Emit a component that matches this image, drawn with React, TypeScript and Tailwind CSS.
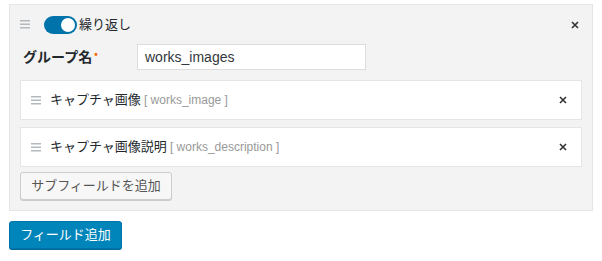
import React from 'react';

const font = "font-['Helvetica_Neue','Liberation_Sans','Noto_Sans_CJK_JP',sans-serif]";

const Handle: React.FC = () => (
  <svg width="10" height="9" viewBox="0 0 10 9" className="shrink-0">
    <rect x="0" y="0" width="10" height="1.5" fill="#b4b9be" />
    <rect x="0" y="3.5" width="10" height="1.5" fill="#b4b9be" />
    <rect x="0" y="7" width="10" height="1.5" fill="#b4b9be" />
  </svg>
);

const Close: React.FC = () => (
  <svg width="8" height="8" viewBox="0 0 8 8" className="shrink-0">
    <path d="M1 1 L7 7 M7 1 L1 7" stroke="#333" strokeWidth="1.6" />
  </svg>
);

const SubField: React.FC<{ label: string; name: string }> = ({ label, name }) => (
  <div className="flex h-[40px] items-center border border-[#e5e5e5] bg-white pl-[10px] pr-[14px]">
    <Handle />
    <span className="ml-[9px] text-[13px] text-[#23282d]">{label}</span>
    <span className="ml-[3px] text-[12px] text-[#999]">[ {name} ]</span>
    <div className="flex-1" />
    <Close />
  </div>
);

export default function App() {
  return (
    <div className={`${font} w-[602px] h-[261px] bg-white pl-[9px] pt-[4px]`}>
      <div className="w-[584px] h-[207px] border border-[#e5e5e5] bg-[#f3f3f3] px-[10px]">
        {/* header row */}
        <div className="flex h-[39px] items-center pr-[3px]">
          <Handle />
          <div className="ml-[14px] flex h-[18px] w-[33px] items-center justify-end rounded-full bg-[#0073aa] pr-[2px]">
            <div className="h-[14px] w-[14px] rounded-full bg-white" />
          </div>
          <span className="ml-[2px] text-[13px] text-[#23282d]">繰り返し</span>
          <div className="flex-1" />
          <Close />
        </div>

        {/* group name */}
        <div className="flex items-center">
          <span className="ml-[3px] w-[108px] text-[14px] font-bold text-[#23282d]">
            グループ名<span className="ml-[2px] align-top text-[10px] text-[#ff6600]">•</span>
          </span>
          <div className="ml-[6px] flex h-[26px] w-[229px] items-center border border-[#ddd] bg-white px-[7px] text-[14px] text-[#32373c]">
            works_images
          </div>
        </div>

        {/* subfields */}
        <div className="mt-[10px] flex flex-col gap-[7px]">
          <SubField label="キャプチャ画像" name="works_image" />
          <SubField label="キャプチャ画像説明" name="works_description" />
        </div>

        <button className="mt-[5px] h-[28px] w-[152px] rounded-[3px] border border-[#ccc] bg-[#f7f7f7] text-[13px] text-[#555] shadow-[0_1px_0_#ccc]">
          サブフィールドを追加
        </button>
      </div>

      <button className="mt-[10px] h-[28px] w-[113px] rounded-[3px] border border-[#0073aa] bg-[#0085ba] text-[13px] text-white shadow-[0_1px_0_#006799]">
        フィールド追加
      </button>
    </div>
  );
}
